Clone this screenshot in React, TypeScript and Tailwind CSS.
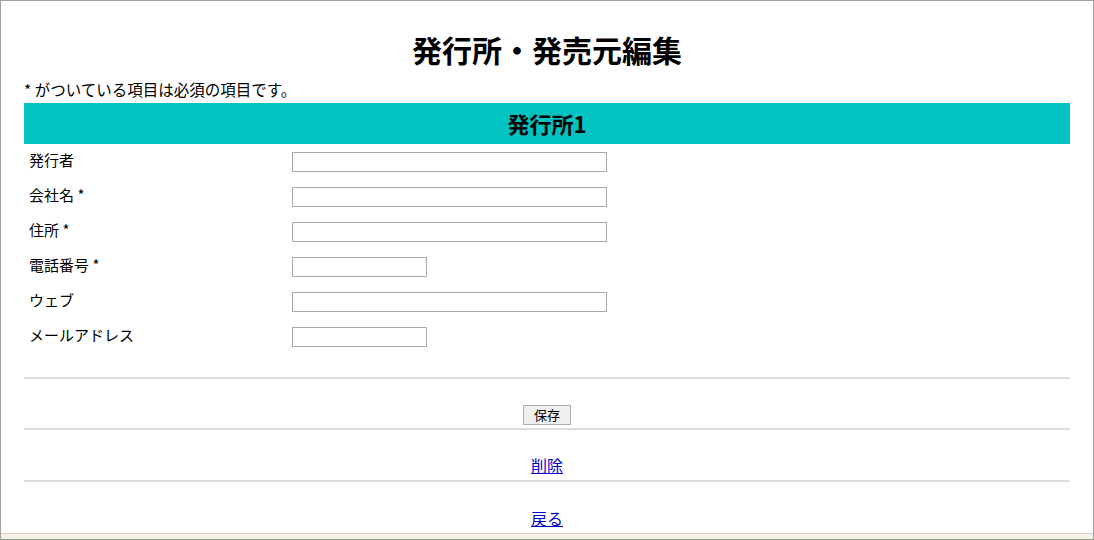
import React from "react";

interface FieldRow {
  label: string;
  required?: boolean;
  short?: boolean;
}

const fields: FieldRow[] = [
  { label: "発行者" },
  { label: "会社名", required: true },
  { label: "住所", required: true },
  { label: "電話番号", required: true, short: true },
  { label: "ウェブ" },
  { label: "メールアドレス", short: true },
];

const font = { fontFamily: '"Noto Sans CJK JP", "Noto Sans", sans-serif' };

export default function App() {
  return (
    <div
      className="flex flex-col w-[1094px] h-[540px] overflow-hidden bg-white border-x border-t border-[#a0a0a0] text-black"
      style={font}
    >
      <div className="flex-1 overflow-hidden px-[23px]">
        <h1 className="pt-[30px] h-[66px] leading-[36px] text-center text-[30px] font-bold">
          発行所・発売元編集
        </h1>
        <p className="mt-[13px] h-[18px] leading-[18px] text-[15.5px]">
          * がついている項目は必須の項目です。
        </p>
        <div className="mt-[5px] h-[41px] leading-[41px] bg-[#02c2c2] text-center text-[22px] font-bold">
          発行所1
        </div>

        <div className="flex flex-col">
          {fields.map((f) => (
            <div key={f.label} className="flex items-center h-[35px]">
              <label className="w-[268px] pl-[5px] text-[15px] leading-[18px] -mt-[3px]">
                {f.label}
                {f.required && " *"}
              </label>
              <input
                type="text"
                className={`h-[20px] border border-[#a9a9a9] bg-white outline-none ${
                  f.short ? "w-[135px]" : "w-[315px]"
                }`}
              />
            </div>
          ))}
        </div>

        <div className="mt-[23px] h-[2px] bg-[#dcdcdc]" />
        <div className="flex justify-center pt-[26px] pb-[3px]">
          <button className="w-[48px] h-[20px] border border-[#adadad] bg-[#efefef] text-[13px] leading-[18px]">
            保存
          </button>
        </div>
        <div className="h-[2px] bg-[#dcdcdc]" />
        <div className="flex justify-center pt-[25px] pb-[5px]">
          <a href="#" className="text-[16px] leading-[20px] text-[#0000cc] underline">
            削除
          </a>
        </div>
        <div className="h-[2px] bg-[#dcdcdc]" />
        <div className="flex justify-center pt-[26px]">
          <a href="#" className="text-[16px] leading-[20px] text-[#0000cc] underline">
            戻る
          </a>
        </div>
      </div>
      <div className="h-[7px] shrink-0 border-t border-b border-t-[#e4c8c8] border-b-[#8c9a87] bg-[#f4f4e4]" />
    </div>
  );
}
